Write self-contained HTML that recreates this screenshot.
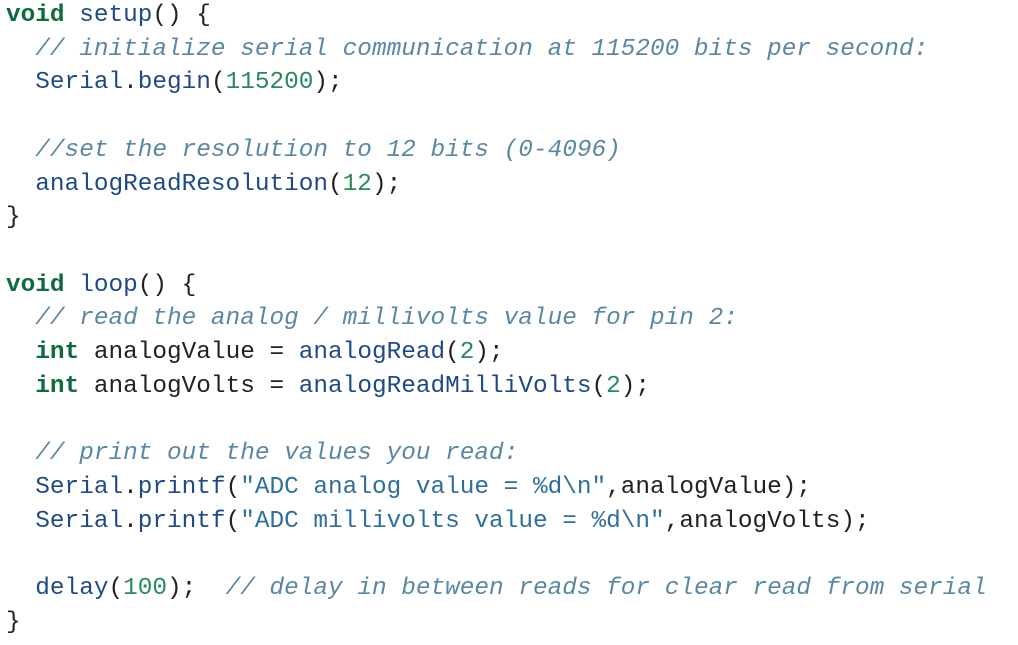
<!DOCTYPE html>
<html><head><meta charset="utf-8"><style>
html,body{margin:0;padding:0;background:#fff;width:1018px;height:645px;overflow:hidden}
pre{margin:-1px 0 0 6px;font-family:"Liberation Mono",monospace;font-size:24.4px;line-height:33.7px;color:#222;letter-spacing:0}
.k{color:#0d6b3c;font-weight:bold}
.f{color:#1f4a85}
.c{color:#5a88a3;font-style:italic}
.n{color:#2a8a5c}
.s{color:#2f6f9a}
</style></head><body><pre><span class="k">void</span> <span class="f">setup</span>() {
  <span class="c">// initialize serial communication at 115200 bits per second:</span>
  <span class="f">Serial</span>.<span class="f">begin</span>(<span class="n">115200</span>);

  <span class="c">//set the resolution to 12 bits (0-4096)</span>
  <span class="f">analogReadResolution</span>(<span class="n">12</span>);
}

<span class="k">void</span> <span class="f">loop</span>() {
  <span class="c">// read the analog / millivolts value for pin 2:</span>
  <span class="k">int</span> analogValue = <span class="f">analogRead</span>(<span class="n">2</span>);
  <span class="k">int</span> analogVolts = <span class="f">analogReadMilliVolts</span>(<span class="n">2</span>);

  <span class="c">// print out the values you read:</span>
  <span class="f">Serial</span>.<span class="f">printf</span>(<span class="s">"ADC analog value = %d\n"</span>,analogValue);
  <span class="f">Serial</span>.<span class="f">printf</span>(<span class="s">"ADC millivolts value = %d\n"</span>,analogVolts);

  <span class="f">delay</span>(<span class="n">100</span>);  <span class="c">// delay in between reads for clear read from serial</span>
}
</pre></body></html>
